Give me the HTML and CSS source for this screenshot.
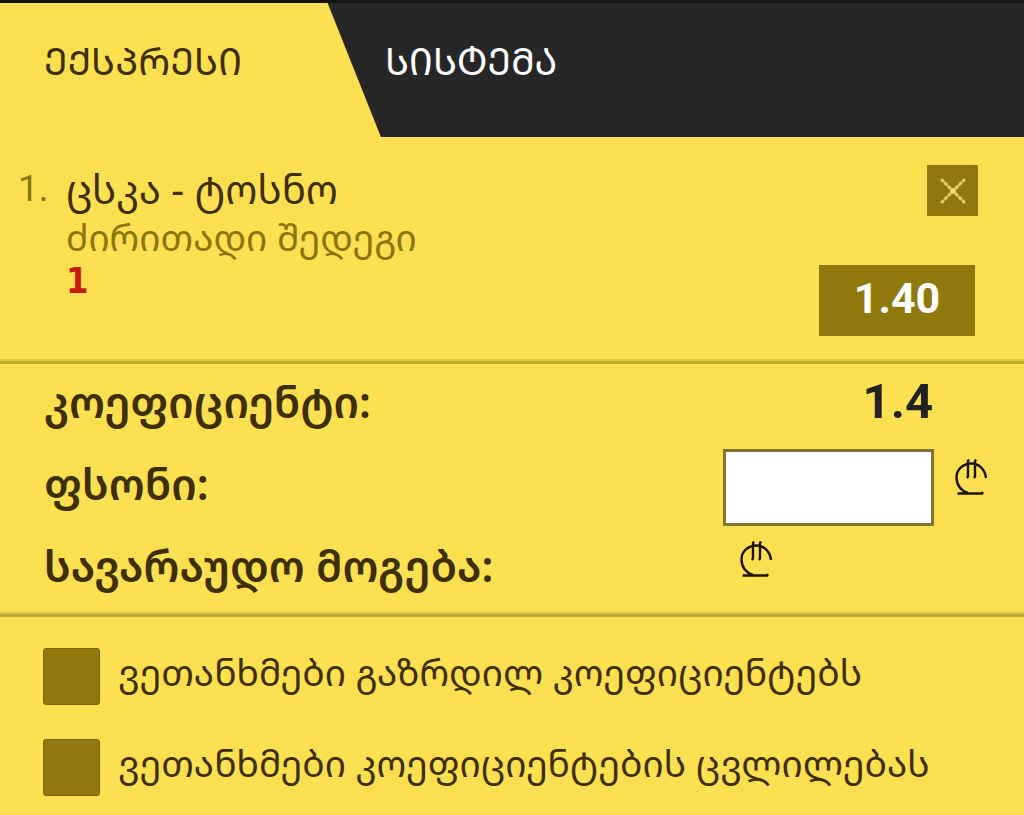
FILE: index.html
```html
<!DOCTYPE html>
<html lang="ka">
<head>
<meta charset="utf-8">
<meta name="viewport" content="width=device-width, initial-scale=1">
<title>ექსპრესი</title>
<link rel="stylesheet" href="styles.css">
</head>
<body>
<svg class="sprite" aria-hidden="true">
  <symbol id="lari" viewBox="0 0 34 40">
    <path d="M32 21C31 12 24.500 6.500 17.500 6.500C8.500 6.500 2.500 13 2.500 20.500C2.500 28 7 34 14 36M3.500 36.500H28L29 35M15 2.500L14 4V19.500L13 21M22 2.500L21 4V19.500L20 21" fill="none" stroke="currentColor" stroke-width="2.400"/>
  </symbol>
</svg>
<nav class="tabs">
  <button class="tab tab-active" type="button">ᲔᲥᲡᲞᲠᲔᲡᲘ</button>
  <button class="tab" type="button">ᲡᲘᲡᲢᲔᲛᲐ</button>
</nav>
<main>
  <section class="bet">
    <span class="bet-number">1.</span>
    <div class="bet-info">
      <h1 class="match">ცსკა - ტოსნო</h1>
      <p class="market">ძირითადი შედეგი</p>
      <p class="pick">1</p>
    </div>
    <div class="bet-side">
      <button class="remove" type="button" aria-label="წაშლა">
        <svg class="cross" viewBox="0 0 24 24" aria-hidden="true"><path d="M2 2L22 22M22 2L2 22" stroke="#cdb74c" stroke-width="2.500"/><path d="M2 2L22 22M22 2L2 22" stroke="#ead671" stroke-width="3" stroke-linecap="round" stroke-dasharray="0 4.714"/><circle cx="12" cy="12" r="2.600" fill="#f5dd70"/></svg>
      </button>
      <span class="odd">1.40</span>
    </div>
  </section>
  <form class="slip">
    <div class="summary">
      <div class="row"><span class="label">კოეფიციენტი:</span><output class="total">1.4</output></div>
      <div class="row"><label class="label" for="stake">ფსონი:</label><input class="stake" id="stake" type="text" inputmode="decimal"><svg class="lari" role="img" aria-label="ლარი"><use href="#lari"/></svg></div>
      <div class="row"><span class="label">სავარაუდო მოგება:</span><span class="payout"><svg class="lari" role="img" aria-label="ლარი"><use href="#lari"/></svg></span></div>
    </div>
    <div class="options">
      <label class="option"><input class="check" type="checkbox"><span class="option-text">ვეთანხმები გაზრდილ კოეფიციენტებს</span></label>
      <label class="option"><input class="check" type="checkbox"><span class="option-text">ვეთანხმები კოეფიციენტების ცვლილებას</span></label>
    </div>
  </form>
</main>
</body>
</html>
```
FILE: styles.css
```css
* { box-sizing: border-box; }
body {
  margin: 0;
  min-height: 100vh;
  background: #fde051;
  color: #3d2f00;
  font-family: "Noto Sans Georgian", "Noto Sans", "DejaVu Sans", sans-serif;
}
.sprite { display: none; }
h1, p { margin: 0; font-weight: 400; }
button, input { font: inherit; border: 0; padding: 0; }
.tabs {
  display: flex;
  height: 137px;
  border-top: 3px solid #141414;
  background: #272727;
}
.tab {
  display: flex;
  padding: 30px 0 0 4px;
  background: none;
  color: #fff;
  font-size: 38px;
  line-height: 54px;
}
.tab-active {
  flex: 0 0 37.2%;
  padding-left: 44px;
  background: #fde051;
  color: #3d2f00;
  clip-path: polygon(0 0, 86% 0, 100% 100%, 0 100%);
}
.bet {
  display: flex;
  padding: 28px 46px 25px 18px;
  border-bottom: 3px solid #c0a830;
  box-shadow: inset 0 -2px #e2c944;
}
.bet-number {
  width: 48px;
  color: #8b7409;
  font: 37px/48px Roboto, sans-serif;
}
.bet-info { flex: 1; font-size: 37px; }
.match { font-size: 40px; line-height: 48px; }
.market { color: #8b7409; line-height: 48px; }
.pick {
  color: #c91b0c;
  font: 700 36px/40px "DejaVu Sans Condensed", "DejaVu Sans", sans-serif;
}
.bet-side {
  display: flex;
  flex-direction: column;
  align-items: flex-end;
  gap: 49px;
}
.remove {
  display: grid;
  place-items: center;
  width: 51px;
  height: 51px;
  background: #8f790c;
}
.cross { width: 26px; height: 26px; }
.odd {
  width: 156px;
  margin-right: 3px;
  padding-bottom: 4px;
  background: #8f790c;
  color: #fff;
  font: 700 43px/67px Roboto, sans-serif;
  text-align: center;
}
.summary {
  padding: 0 36px 4px 44px;
  border-bottom: 3px solid #c0a830;
  box-shadow: inset 0 -2px #e2c944;
}
.row { display: flex; align-items: center; height: 82px; }
.label { flex: 1; padding-bottom: 8px; font-size: 43px; font-weight: 600; }
.total {
  margin-right: 55px;
  padding-bottom: 6px;
  color: #222;
  font: 700 49px/70px Roboto, sans-serif;
}
.stake {
  width: 211px;
  height: 77px;
  margin-right: 20px;
  padding: 0 12px;
  border: 3px solid #7f7434;
  background: #fff;
  font-size: 36px;
}
.lari { display: block; width: 34px; height: 40px; margin-bottom: 20px; color: #1c1400; }
.payout { width: 249px; }
.options {
  display: grid;
  gap: 34px;
  padding: 31px 43px 18px;
}
.option { display: flex; align-items: center; gap: 18px; font-size: 37px; line-height: 48px; }
.option-text { padding-bottom: 9px; }
.check {
  appearance: none;
  flex: none;
  width: 57px;
  height: 57px;
  margin: 0;
  border: 1px solid #776107;
  border-radius: 3px;
  background: #8f790c;
}
.check:checked { background: #3d2f00; }
```
